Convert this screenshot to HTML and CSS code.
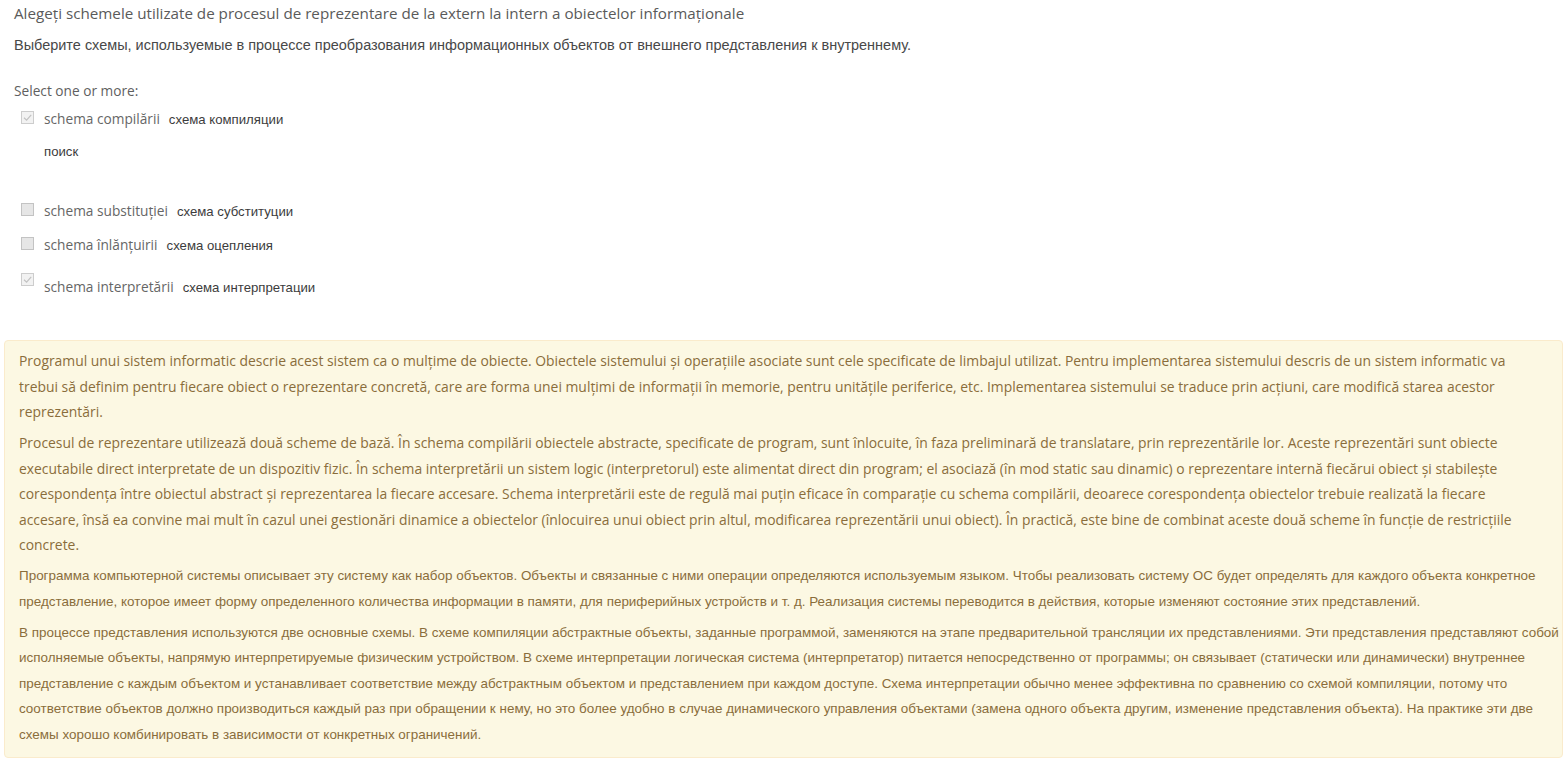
FILE: index.html
```html
<!DOCTYPE html>
<html lang="ro">
<head>
<meta charset="utf-8">
<title>Întrebare</title>
<link rel="stylesheet" href="styles.css">
</head>
<body>
<div class="page">
  <div class="formulation">
    <p class="q-ro">Alegeți schemele utilizate de procesul de reprezentare de la extern la intern a obiectelor informaționale</p>
    <p class="q-ru">Выберите схемы, используемые в процессе преобразования информационных объектов от внешнего представления к внутреннему.</p>
    <div class="prompt">Select one or more:</div>
    <div class="answer">
      <div class="option option-first">
        <span class="check checked"><svg viewBox="0 0 13 13" width="13" height="13"><path d="M3 6.8 L5.6 9.2 L10.2 3.8" fill="none" stroke="#c2c2c2" stroke-width="1.2"/></svg></span>
        <div class="label">
          <div class="label-line"><span class="lat">schema compilării</span><span class="cyr">схема компиляции</span></div>
          <div class="sub cyr">поиск</div>
        </div>
      </div>
      <div class="option">
        <span class="check"></span>
        <div class="label"><div class="label-line"><span class="lat">schema substituției</span><span class="cyr">схема субституции</span></div></div>
      </div>
      <div class="option">
        <span class="check"></span>
        <div class="label"><div class="label-line"><span class="lat">schema înlănțuirii</span><span class="cyr">схема оцепления</span></div></div>
      </div>
      <div class="option option-low">
        <span class="check checked"><svg viewBox="0 0 13 13" width="13" height="13"><path d="M3 6.8 L5.6 9.2 L10.2 3.8" fill="none" stroke="#c2c2c2" stroke-width="1.2"/></svg></span>
        <div class="label"><div class="label-line"><span class="lat">schema interpretării</span><span class="cyr">схема интерпретации</span></div></div>
      </div>
    </div>
  </div>

  <div class="feedback">
    <p class="fb-ro">Programul unui sistem informatic descrie acest sistem ca o mulţime de obiecte. Obiectele sistemului şi operaţiile asociate sunt cele specificate de limbajul utilizat. Pentru implementarea sistemului descris de un sistem informatic va<br>trebui să definim pentru fiecare obiect o reprezentare concretă, care are forma unei mulţimi de informaţii în memorie, pentru unităţile periferice, etc. Implementarea sistemului se traduce prin acţiuni, care modifică starea acestor<br>reprezentări.</p>
    <p class="fb-ro">Procesul de reprezentare utilizează două scheme de bază. În schema compilării obiectele abstracte, specificate de program, sunt înlocuite, în faza preliminară de translatare, prin reprezentările lor. Aceste reprezentări sunt obiecte<br>executabile direct interpretate de un dispozitiv fizic. În schema interpretării un sistem logic (interpretorul) este alimentat direct din program; el asociază (în mod static sau dinamic) o reprezentare internă fiecărui obiect şi stabileşte<br>corespondenţa între obiectul abstract şi reprezentarea la fiecare accesare. Schema interpretării este de regulă mai puţin eficace în comparaţie cu schema compilării, deoarece corespondenţa obiectelor trebuie realizată la fiecare<br>accesare, însă ea convine mai mult în cazul unei gestionări dinamice a obiectelor (înlocuirea unui obiect prin altul, modificarea reprezentării unui obiect). În practică, este bine de combinat aceste două scheme în funcţie de restricţiile<br>concrete.</p>
    <p class="fb-ru">Программа компьютерной системы описывает эту систему как набор объектов. Объекты и связанные с ними операции определяются используемым языком. Чтобы реализовать систему ОС будет определять для каждого объекта конкретное<br>представление, которое имеет форму определенного количества информации в памяти, для периферийных устройств и т. д. Реализация системы переводится в действия, которые изменяют состояние этих представлений.</p>
    <p class="fb-ru">В процессе представления используются две основные схемы. В схеме компиляции абстрактные объекты, заданные программой, заменяются на этапе предварительной трансляции их представлениями. Эти представления представляют собой<br>исполняемые объекты, напрямую интерпретируемые физическим устройством. В схеме интерпретации логическая система (интерпретатор) питается непосредственно от программы; он связывает (статически или динамически) внутреннее<br>представление с каждым объектом и устанавливает соответствие между абстрактным объектом и представлением при каждом доступе. Схема интерпретации обычно менее эффективна по сравнению со схемой компиляции, потому что<br>соответствие объектов должно производиться каждый раз при обращении к нему, но это более удобно в случае динамического управления объектами (замена одного объекта другим, изменение представления объекта). На практике эти две<br>схемы хорошо комбинировать в зависимости от конкретных ограничений.</p>
  </div>
</div>
</body>
</html>
```
FILE: styles.css
```css
html, body {
  margin: 0;
  background: #ffffff;
}

body {
  font-family: "Open Sans", "Noto Sans", sans-serif;
  color: #555555;
}

.page {
  padding: 0 4px;
}

.formulation {
  padding: 0 10px;
}

.q-ro {
  margin: 3px 0 0;
  font-size: 15.2px;
  line-height: 20px;
  color: #5a5a5a;
}

.q-ru {
  margin: 12px 0 0;
  font-family: "Liberation Sans", Arial, sans-serif;
  font-size: 14.48px;
  line-height: 20px;
  color: #484848;
}

.prompt {
  margin-top: 26px;
  font-size: 13.7px;
  line-height: 20px;
  color: #5f5f5f;
}

.answer {
  margin-top: 8px;
}

.option {
  display: flex;
  align-items: flex-start;
  padding-left: 7px;
  margin-bottom: 14px;
}

.option-first {
  margin-bottom: 39px;
}

.option-low {
  padding-top: 2px;
}

.option-low .label {
  padding-top: 6px;
}

.check {
  flex: none;
  box-sizing: border-box;
  width: 13px;
  height: 13px;
  margin-top: 2px;
  margin-right: 10px;
  border: 1px solid #c3c3c3;
  background: #e6e6e6;
  display: flex;
}

.check svg {
  display: block;
  margin: -1px;
}

.check.checked {
  background: #f2f2f2;
  border-color: #cdcdcd;
}

.label-line {
  height: 20px;
  font-size: 13.7px;
  line-height: 20px;
  white-space: nowrap;
}

.lat {
  color: #666666;
}

.cyr {
  font-family: "Liberation Sans", Arial, sans-serif;
  font-size: 13.2px;
  color: #3c3c3c;
}

.label-line .cyr {
  margin-left: 9px;
}

.sub {
  height: 20px;
  margin-top: 13px;
  line-height: 20px;
}

.feedback {
  margin-top: 43px;
  padding: 7px 14px 10px;
  border: 1px solid #faebcc;
  border-radius: 4px;
  background: #fcf8e3;
  color: #8a6d3b;
}

.feedback p {
  margin: 0 0 5.5px;
  line-height: 25.5px;
  white-space: nowrap;
}

.feedback p:last-child {
  margin-bottom: 0;
}

.fb-ro {
  font-size: 13.9px;
}

.fb-ru {
  font-family: "Liberation Sans", Arial, sans-serif;
  font-size: 13.44px;
}
```
